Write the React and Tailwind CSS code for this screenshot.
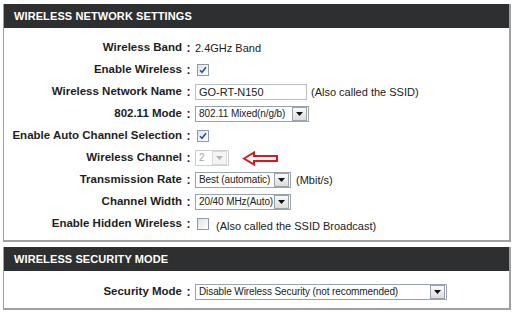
import React from "react";

const font = { fontFamily: '"Liberation Sans", Arial, sans-serif' };

function Arrow({ disabled }) {
  return (
    <span className={`inline-flex h-[14px] w-[15px] shrink-0 items-center justify-center border ${disabled ? "border-[#dadada] bg-[#f4f4f4]" : "border-[#9aa3ad] bg-gradient-to-b from-[#fafafa] to-[#dcdcdc]"}`}>
      <svg width="7" height="4" viewBox="0 0 7 4"><path d="M0 0h7L3.5 4z" fill={disabled ? "#b4b4b4" : "#111"} /></svg>
    </span>
  );
}

function Select({ value, width, disabled }) {
  return (
    <span className={`inline-flex h-[16px] shrink-0 items-center border bg-white pr-px ${disabled ? "border-[#cfcfcf] text-[#a8a8a8]" : "border-[#9aa3ad] text-[#222]"}`} style={{ width }}>
      <span className="flex-1 overflow-hidden whitespace-nowrap pl-[3px] text-[10px] leading-none tracking-[-0.1px]">{value}</span>
      <Arrow disabled={disabled} />
    </span>
  );
}

function Check({ checked }) {
  return (
    <span className="ml-[2px] inline-flex h-[12px] w-[12px] shrink-0 items-center justify-center border border-[#8f9aa6] bg-gradient-to-br from-[#dfe3e9] to-white">
      {checked && (
        <svg width="8" height="8" viewBox="0 0 8 8"><path d="M1 4.2l2 2L7 1.2" stroke="#2a4f9e" strokeWidth="1.6" fill="none" /></svg>
      )}
    </span>
  );
}

function Row({ label, children }) {
  return (
    <div className="flex h-[22px] items-center">
      <div className="w-[178px] shrink-0 whitespace-nowrap text-right text-[11.5px] font-bold text-[#1e1e1e]">{label}</div>
      <div className="w-[13px] shrink-0 text-center text-[12px] font-bold text-[#1e1e1e]">:</div>
      <div className="flex items-center whitespace-nowrap text-[11px] text-[#222]">{children}</div>
    </div>
  );
}

function Panel({ title, children, className }) {
  return (
    <div className={`mx-[3px] border-b-2 border-l border-r-2 border-[#a0a0a0] bg-white ${className}`}>
      <div className="flex h-[24px] items-center bg-[#2e2f31] pl-[10px] text-[11px] font-bold uppercase tracking-[0.1px] text-white">{title}</div>
      {children}
    </div>
  );
}

export default function App() {
  return (
    <div className="h-[314px] w-[514px] bg-white pt-[4px]" style={font}>
      <Panel title="Wireless Network Settings">
        <div className="pb-[5px] pt-[9px]">
          <Row label="Wireless Band"><span>2.4GHz Band</span></Row>
          <Row label="Enable Wireless"><Check checked /></Row>
          <Row label="Wireless Network Name">
            <span className="flex h-[16px] w-[112px] items-center border border-[#b8bec6] pl-[3px] text-[11px]">GO-RT-N150</span>
            <span className="ml-[4px]">(Also called the SSID)</span>
          </Row>
          <Row label="802.11 Mode"><Select value="802.11 Mixed(n/g/b)" width={114} /></Row>
          <Row label="Enable Auto Channel Selection"><Check checked /></Row>
          <Row label="Wireless Channel">
            <Select value="2" width={34} disabled />
            <svg className="ml-[13px]" width="37" height="15" viewBox="0 0 37 15">
              <path d="M2 7.5L12 1.5V5H35V10H12V13.5Z" fill="none" stroke="#e0161b" strokeWidth="2" />
            </svg>
          </Row>
          <Row label="Transmission Rate">
            <Select value="Best (automatic)" width={96} />
            <span className="ml-[5px]">(Mbit/s)</span>
          </Row>
          <Row label="Channel Width"><Select value="20/40 MHz(Auto)" width={96} /></Row>
          <Row label="Enable Hidden Wireless">
            <Check />
            <span className="ml-[7px] mt-[5px]">(Also called the SSID Broadcast)</span>
          </Row>
        </div>
      </Panel>
      <Panel title="Wireless Security Mode" className="mt-[5px]">
        <div className="pb-[5px] pt-[10px]">
          <Row label="Security Mode"><Select value="Disable Wireless Security (not recommended)" width={252} /></Row>
        </div>
      </Panel>
    </div>
  );
}
